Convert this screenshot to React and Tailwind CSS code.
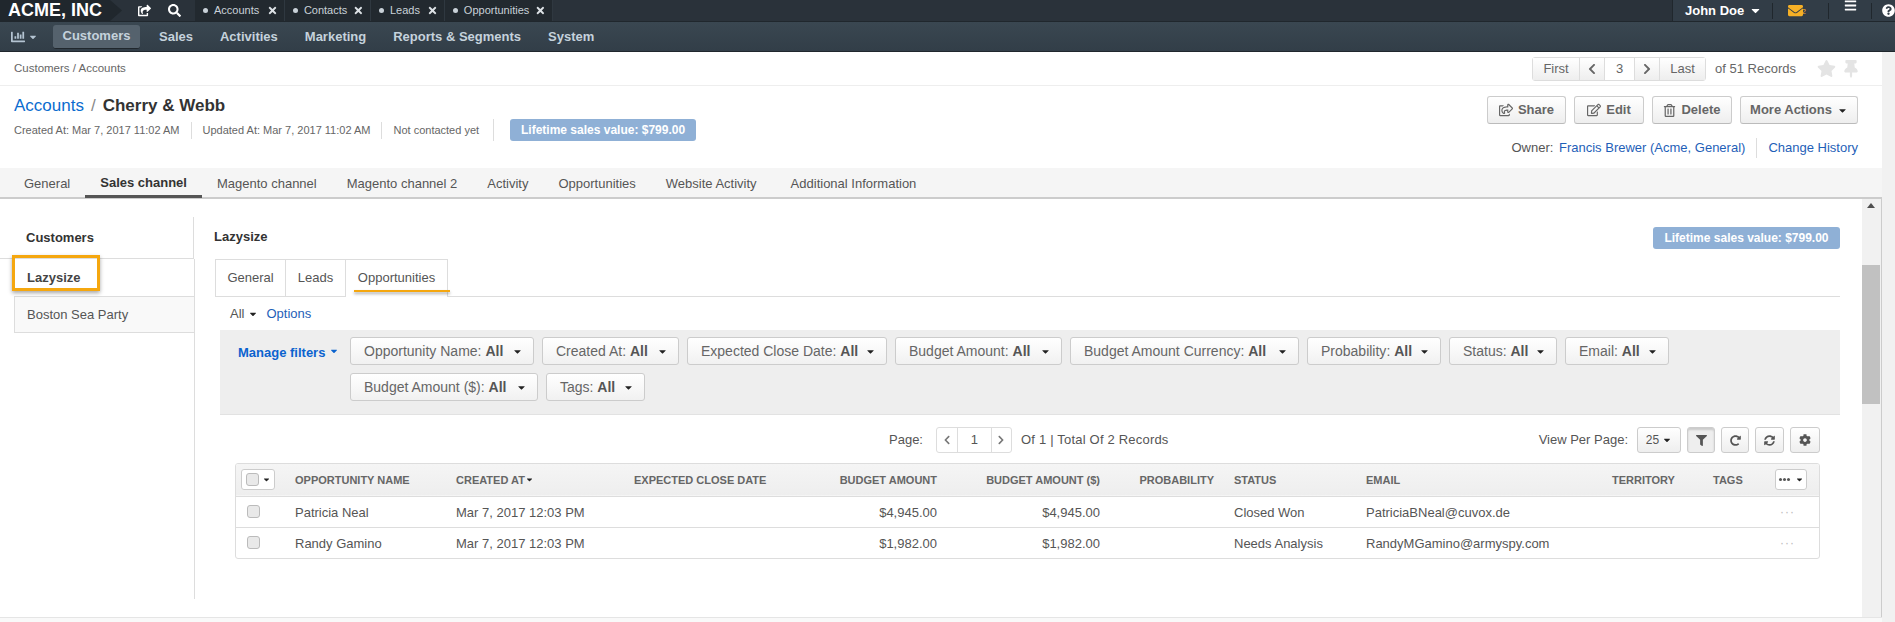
import {
  FaBars, FaCaretDown, FaChartBar, FaChevronLeft, FaChevronRight, FaCog, FaEnvelope, FaFilter,
  FaQuestionCircle, FaRedoAlt, FaRegEdit, FaRegShareSquare, FaRegTrashAlt, FaSearch, FaShareSquare,
  FaStar, FaSyncAlt, FaThumbtack, FaTimes,
} from 'react-icons/fa';

const pinnedTabs = [
  { label: 'Accounts', width: 'w-[90px]' },
  { label: 'Contacts', width: 'w-[86px]' },
  { label: 'Leads', width: 'w-[74px]' },
  { label: 'Opportunities', width: 'w-[108px]' },
];

const navItems = ['Sales', 'Activities', 'Marketing', 'Reports & Segments', 'System'];

const pageTabs = ['General', 'Sales channel', 'Magento channel', 'Magento channel 2', 'Activity', 'Opportunities', 'Website Activity', 'Additional Information'];

const filters = [
  { name: 'Opportunity Name', width: 'w-[184px]' },
  { name: 'Created At', width: 'w-[137px]' },
  { name: 'Expected Close Date', width: 'w-[200px]' },
  { name: 'Budget Amount', width: 'w-[167px]' },
  { name: 'Budget Amount Currency', width: 'w-[229px]' },
  { name: 'Probability', width: 'w-[134px]' },
  { name: 'Status', width: 'w-[108px]' },
  { name: 'Email', width: 'w-[104px]' },
  { name: 'Budget Amount ($)', width: 'w-[188px]' },
  { name: 'Tags', width: 'w-[99px]' },
];

const rows = [
  { name: 'Patricia Neal', amount: '$4,945.00', status: 'Closed Won', email: 'PatriciaBNeal@cuvox.de' },
  { name: 'Randy Gamino', amount: '$1,982.00', status: 'Needs Analysis', email: 'RandyMGamino@armyspy.com' },
];

function TopBar() {
  return (
    <div className="h-[22px] flex bg-[#2a323a] border-b border-[#20272d] text-white">
      <div className="w-[122px] flex items-center pl-[8px] text-[18px] font-bold bg-[#20272d] [clip-path:polygon(0_0,110px_0,122px_50%,110px_100%,0_100%)]">ACME, INC</div>
      <div className="w-[73px] flex items-center pl-[16px] gap-[17px] text-[13px]">
        <FaShareSquare />
        <FaSearch />
      </div>
      <div className="flex bg-[#22292f]">
        {pinnedTabs.map((tab) => (
          <div key={tab.label} className={`${tab.width} flex items-center pl-[8px] gap-[6px] border-r border-[#2f3840] text-[11px] text-[#c9d1d8]`}>
            <span className="w-[5px] h-[5px] rounded-full bg-[#c9d1d8]" />
            <span>{tab.label}</span>
            <FaTimes className="ml-auto mr-[6px] text-[11px] text-[#dde2e6]" />
          </div>
        ))}
      </div>
      <div className="ml-auto w-[223px] flex items-center bg-[#323d47] border-l border-[#20272d]">
        <div className="w-[101px] flex items-center pl-[12px] gap-[5px] text-[13px] font-bold border-r border-[#20272d] h-[16px]">
          John Doe <FaCaretDown className="text-[13px]" />
        </div>
        <div className="w-[56px] flex items-center pl-[15px] border-r border-[#20272d] h-[16px] relative">
          <FaEnvelope className="text-[#f6b026] text-[15px]" />
          <span className="text-[8px] text-[#f6b026] -ml-[2px] mt-[2px]">2</span>
        </div>
        <div className="w-[43px] flex pl-[15px] border-r border-[#20272d] h-[16px]">
          <FaBars className="text-[13px] -mt-[4px]" />
        </div>
        <FaQuestionCircle className="ml-[10px] text-[13px] shrink-0" />
      </div>
    </div>
  );
}

function NavBar() {
  return (
    <div className="h-[30px] flex items-center bg-gradient-to-b from-[#3a4751] to-[#323e48] border-b border-[#20272d] text-[13px] font-bold text-[#c5d2dc]">
      <div className="w-[53px] flex items-center pl-[11px] gap-[3px] text-[#b4c4d2]">
        <FaChartBar className="text-[14px]" />
        <FaCaretDown className="text-[10px]" />
      </div>
      <div className="w-[87px] h-[24px] flex items-center justify-center rounded-[3px] bg-[#55626d] border-b border-[#20272d]">Customers</div>
      <div className="flex gap-[27px] ml-[19px]">
        {navItems.map((item) => <span key={item}>{item}</span>)}
      </div>
    </div>
  );
}

function Pager() {
  const cell = 'h-full flex items-center justify-center border-r border-[#ddd] bg-gradient-to-b from-white to-[#eee]';
  return (
    <div className="h-[24px] flex items-center rounded-[3px] border border-[#ddd] text-[13px] text-[#666]">
      <div className={`${cell} w-[47px]`}>First</div>
      <div className={`${cell} w-[25px]`}><FaChevronLeft className="text-[12px]" /></div>
      <div className="h-full w-[30px] flex items-center justify-center border-r border-[#ddd]">3</div>
      <div className={`${cell} w-[25px]`}><FaChevronRight className="text-[12px]" /></div>
      <div className="h-full flex items-center justify-center bg-gradient-to-b from-white to-[#eee] w-[45px]">Last</div>
    </div>
  );
}

function ActionButton({ icon, children, width }) {
  return (
    <button className={`${width} h-[28px] flex items-center justify-center gap-[5px] rounded-[3px] border border-[#ccc] border-b-[#bbb] bg-gradient-to-b from-white to-[#eee] text-[13px] font-bold text-[#666]`}>
      {icon}
      {children}
    </button>
  );
}

function PageHeader() {
  return (
    <>
      <div className="h-[34px] flex items-center pl-[14px] pr-[22px] border-b border-[#eee] text-[11.5px] text-[#666]">
        <span>Customers / Accounts</span>
        <div className="ml-auto flex items-center">
          <Pager />
          <span className="ml-[9px] text-[13px] text-[#666]">of 51 Records</span>
          <FaStar className="ml-[21px] text-[19px] text-[#e4e4e4]" />
          <FaThumbtack className="ml-[6px] text-[18px] text-[#e4e4e4]" />
        </div>
      </div>
      <div className="h-[82px] flex justify-between pl-[14px] pr-[24px]">
        <div>
          <div className="mt-[9px] text-[17px] leading-[22px] text-[#333]">
            <span className="text-[#0b6ccf]">Accounts</span>
            <span className="mx-[7px] text-[#888]">/</span>
            <span className="font-bold">Cherry &amp; Webb</span>
          </div>
          <div className="mt-[2px] flex items-center text-[11px] text-[#666]">
            <span className="pr-[11px] border-r border-[#ddd] leading-[17px]">Created At: Mar 7, 2017 11:02 AM</span>
            <span className="px-[11px] border-r border-[#ddd] leading-[17px]">Updated At: Mar 7, 2017 11:02 AM</span>
            <span className="px-[11px] pr-[14px] border-r border-[#ddd] leading-[22px]">Not contacted yet</span>
            <span className="ml-[16px] w-[186px] h-[22px] flex items-center justify-center rounded-[3px] bg-[#8fb0d6] font-bold text-[12px] text-white">Lifetime sales value: $799.00</span>
          </div>
        </div>
        <div className="flex flex-col items-end">
          <div className="mt-[10px] flex gap-[8px]">
            <ActionButton width="w-[79px]" icon={<FaRegShareSquare className="text-[14px]" />}>Share</ActionButton>
            <ActionButton width="w-[70px]" icon={<FaRegEdit className="text-[14px]" />}>Edit</ActionButton>
            <ActionButton width="w-[80px]" icon={<FaRegTrashAlt className="text-[13px]" />}>Delete</ActionButton>
            <ActionButton width="w-[118px]">More Actions <FaCaretDown className="text-[#222] text-[11px]" /></ActionButton>
          </div>
          <div className="mt-[14px] flex items-center text-[13px] text-[#555]">
            <span className="pr-[11px] border-r border-[#ddd]">Owner: <span className="ml-[2px] text-[#1f5fb8]">Francis Brewer (Acme, General)</span></span>
            <span className="ml-[11px] text-[#1f5fb8]">Change History</span>
          </div>
        </div>
      </div>
    </>
  );
}

function PageTabs() {
  return (
    <div className="h-[31px] flex pl-[9px] bg-[#f5f5f5] border-b-2 border-[#ccc] text-[13px] text-[#555]">
      {pageTabs.map((tab) => (
        <div
          key={tab}
          className={tab === 'Sales channel'
            ? 'h-[30px] flex items-center pt-[2px] px-[15px] font-bold text-[#333] border-b-[3px] border-[#555]'
            : tab === 'Additional Information'
              ? 'h-[29px] flex items-center pt-[2px] px-[15px] ml-[4px]'
              : 'h-[29px] flex items-center pt-[2px] px-[15px]'}
        >
          {tab}
        </div>
      ))}
    </div>
  );
}

function Sidebar() {
  return (
    <div className="w-[180px] ml-[14px] shrink-0 relative text-[13px]">
      <div className="mt-[18px] h-[42px] flex items-center font-bold text-[#333] border-b border-[#ddd] border-r -ml-[14px] pl-[26px] w-[194px]">Customers</div>
      <div className="h-[37px] flex items-center pl-[13px] font-bold text-[#444]">Lazysize</div>
      <div className="h-[37px] flex items-center pl-[12px] text-[#555] bg-[#f9f9f9] border border-r-0 border-[#ddd]">Boston Sea Party</div>
      {/* orange highlight drawn over the active item */}
      <div className="absolute left-[-2px] top-[56px] w-[88px] h-[36px] border-[3px] border-[#f5a70f] shadow-[0_2px_4px_rgba(0,0,0,0.35)]" />
      <div className="absolute right-[-1px] top-[60px] h-[340px] border-r border-[#ddd]" />
    </div>
  );
}

function SubTabs() {
  return (
    <div className="h-[38px] flex border-b border-[#ddd] text-[13px] text-[#555]">
      <div className="w-[71px] h-[37px] flex items-center justify-center border border-[#ddd] border-b-0">General</div>
      <div className="w-[60px] h-[37px] flex items-center justify-center border-t border-r border-[#ddd]">Leads</div>
      <div className="w-[102px] h-[38px] flex items-center justify-center pb-[1px] border-t border-r border-[#ddd] bg-white relative z-10 shadow-[0_1px_0_#fff]">
        Opportunities
        <span className="absolute left-[8px] top-[30px] w-[96px] h-[2px] bg-[#f5a70f] shadow-[0_2px_3px_rgba(0,0,0,0.35)]" />
      </div>
    </div>
  );
}

function FilterBar() {
  return (
    <div className="ml-[5px] h-[85px] flex bg-[#eee] border-b border-[#e2e2e2] text-[14px] text-[#666]">
      <div className="w-[130px] pl-[18px] pt-[13px] flex items-start gap-[4px] font-bold text-[13px] text-[#0b63ce]">
        Manage filters <FaCaretDown className="mt-[3px] text-[10px]" />
      </div>
      <div className="flex flex-wrap content-start gap-x-[8px] gap-y-[8px] pt-[7px] w-[1400px]">
        {filters.map((filter) => (
          <button key={filter.name} className={`${filter.width} h-[28px] flex items-center justify-between pl-[13px] pr-[10px] rounded-[3px] border border-[#ccc] bg-gradient-to-b from-white to-[#f1f1f1] whitespace-nowrap`}>
            <span>{filter.name}: <b className="text-[#555]">All</b></span>
            <FaCaretDown className="text-[11px] text-[#222]" />
          </button>
        ))}
      </div>
    </div>
  );
}

function GridToolbar() {
  const iconBtn = 'h-[26px] flex items-center justify-center rounded-[3px] border border-[#ccc] bg-gradient-to-b from-white to-[#eee] text-[#555] text-[12px]';
  return (
    <div className="ml-[5px] h-[48px] flex items-start pt-[12px] pr-[20px] text-[13px] text-[#555] relative">
      <div className="ml-[669px] h-[26px] flex items-center">
        <span>Page:</span>
        <div className="ml-[13px] h-[26px] w-[76px] flex items-center rounded-[3px] border border-[#ddd] text-[#777]">
          <div className="w-[20px] flex justify-center"><FaChevronLeft className="text-[10px]" /></div>
          <div className="w-[35px] h-full flex items-center justify-center border-x border-[#ddd] text-[#555]">1</div>
          <div className="w-[19px] flex justify-center"><FaChevronRight className="text-[10px]" /></div>
        </div>
        <span className="ml-[9px] tracking-[0.2px]">Of 1 | Total Of 2 Records</span>
      </div>
      <div className="ml-auto flex items-center gap-[6px]">
        <span className="mr-[3px]">View Per Page:</span>
        <div className={`${iconBtn} w-[44px] gap-[3px] text-[12px]`}>25 <FaCaretDown className="text-[10px] text-[#222]" /></div>
        <div className={`${iconBtn} w-[28px] bg-none bg-[#eee] shadow-[inset_0_2px_2px_rgba(0,0,0,0.15)]`}><FaFilter className="text-[11px]" /></div>
        <div className={`${iconBtn} w-[28px]`}><FaRedoAlt className="text-[11px]" /></div>
        <div className={`${iconBtn} w-[29px]`}><FaSyncAlt className="text-[11px]" /></div>
        <div className={`${iconBtn} w-[30px]`}><FaCog className="text-[12px]" /></div>
      </div>
    </div>
  );
}

function Checkbox() {
  return <span className="block w-[13px] h-[13px] rounded-[3px] border border-[#bbb] bg-[#e9e9e9]" />;
}

function GridTable() {
  const th = 'px-[8px] font-bold text-[11px] text-[#666] whitespace-nowrap';
  const td = 'px-[8px] pt-[2px] text-[13px] text-[#555] whitespace-nowrap';
  return (
    <div className="ml-[20px] mr-[20px] rounded-[3px] border border-[#ddd] overflow-hidden">
      <table className="w-full table-fixed border-collapse">
        <colgroup>
          <col className="w-[51px]" />
          <col className="w-[161px]" />
          <col className="w-[178px]" />
          <col className="w-[154px]" />
          <col className="w-[165px]" />
          <col className="w-[163px]" />
          <col className="w-[118px]" />
          <col className="w-[132px]" />
          <col className="w-[246px]" />
          <col className="w-[101px]" />
          <col className="w-[62px]" />
          <col />
        </colgroup>
        <thead>
          <tr className="h-[32px] bg-gradient-to-b from-[#f5f5f5] to-[#eee] border-b border-[#ddd]">
            <th className="pl-[5px] text-left">
              <div className="w-[34px] h-[21px] flex items-center justify-center gap-[3px] rounded-[3px] border border-[#ccc] bg-white">
                <Checkbox /><FaCaretDown className="text-[9px] text-[#222]" />
              </div>
            </th>
            <th className={`${th} text-left`}>OPPORTUNITY NAME</th>
            <th className={`${th} text-left`}><span className="inline-flex items-center">CREATED AT<FaCaretDown className="text-[9px] text-[#222]" /></span></th>
            <th className={`${th} text-left`}>EXPECTED CLOSE DATE</th>
            <th className={`${th} text-right`}>BUDGET AMOUNT</th>
            <th className={`${th} text-right`}>BUDGET AMOUNT ($)</th>
            <th className={`${th} text-right !pr-[12px]`}>PROBABILITY</th>
            <th className={`${th} text-left`}>STATUS</th>
            <th className={`${th} text-left`}>EMAIL</th>
            <th className={`${th} text-left`}>TERRITORY</th>
            <th className={`${th} text-left`}>TAGS</th>
            <th className="text-left pl-[8px]">
              <div className="w-[32px] h-[21px] flex items-center justify-center gap-[3px] rounded-[3px] border border-[#ccc] bg-white text-[#555]">
                <span className="flex gap-[1px]">
                  <i className="w-[3px] h-[3px] rounded-full bg-[#555]" />
                  <i className="w-[3px] h-[3px] rounded-full bg-[#555]" />
                  <i className="w-[3px] h-[3px] rounded-full bg-[#555]" />
                </span>
                <FaCaretDown className="ml-[2px] text-[9px] text-[#222]" />
              </div>
            </th>
          </tr>
        </thead>
        <tbody>
          {rows.map((row, i) => (
            <tr key={row.name} className={i === 0 ? 'h-[31px] border-b border-[#ddd]' : 'h-[31px]'}>
              <td className="pl-[11px]"><Checkbox /></td>
              <td className={td}>{row.name}</td>
              <td className={td}>Mar 7, 2017 12:03 PM</td>
              <td className={td} />
              <td className={`${td} text-right`}>{row.amount}</td>
              <td className={`${td} text-right`}>{row.amount}</td>
              <td className={td} />
              <td className={td}>{row.status}</td>
              <td className={td}>{row.email}</td>
              <td className={td} />
              <td className={td} />
              <td className="pl-[13px] text-[12px] text-[#bbb] tracking-[1px]">···</td>
            </tr>
          ))}
        </tbody>
      </table>
    </div>
  );
}

function InnerScrollbar() {
  return (
    <div className="w-[20px] shrink-0 bg-[#f1f1f1] border-r border-[#ccc] pr-[1px] flex flex-col items-center">
      <div className="mt-[4px] h-0 w-0 border-x-[4px] border-x-transparent border-b-[5px] border-b-[#505050]" />
      <div className="mt-[57px] w-full h-[139px] bg-[#c1c1c1]" />
    </div>
  );
}

export default function App() {
  return (
    <div className="w-[1895px] h-[622px] overflow-hidden flex flex-col bg-white font-['Liberation_Sans',Arial,sans-serif]">
      <TopBar />
      <NavBar />
      <div className="flex-1 flex min-h-0">
        <div className="flex-1 min-w-0 flex flex-col">
          <PageHeader />
          <PageTabs />
          <div className="flex-1 min-h-0 flex">
            <Sidebar />
            <div className="flex-1 min-w-0 flex flex-col">
              <div className="h-[60px] flex items-start justify-between pl-[20px] pr-[22px]">
                <span className="mt-[28px] text-[13px] font-bold text-[#333]">Lazysize</span>
                <span className="mt-[28px] w-[187px] h-[22px] flex items-center justify-center rounded-[3px] bg-[#8fb0d6] text-[12px] font-bold text-white">Lifetime sales value: $799.00</span>
              </div>
              <div className="pl-[21px] pr-[22px]">
                <SubTabs />
                <div className="h-[33px] flex items-center pl-[15px] text-[13px] text-[#555]">
                  All <FaCaretDown className="ml-[4px] text-[10px] text-[#222]" />
                  <span className="ml-[8px] text-[#1f5fb8]">Options</span>
                </div>
                <FilterBar />
                <GridToolbar />
                <GridTable />
              </div>
              <div className="mt-auto" />
            </div>
            <InnerScrollbar />
          </div>
          <div className="h-[5px] shrink-0 bg-[#f9f9f9] border-t border-[#e5e5e5]" />
        </div>
        <div className="w-[13px] shrink-0 bg-[#f1f1f1]" />
      </div>
    </div>
  );
}
